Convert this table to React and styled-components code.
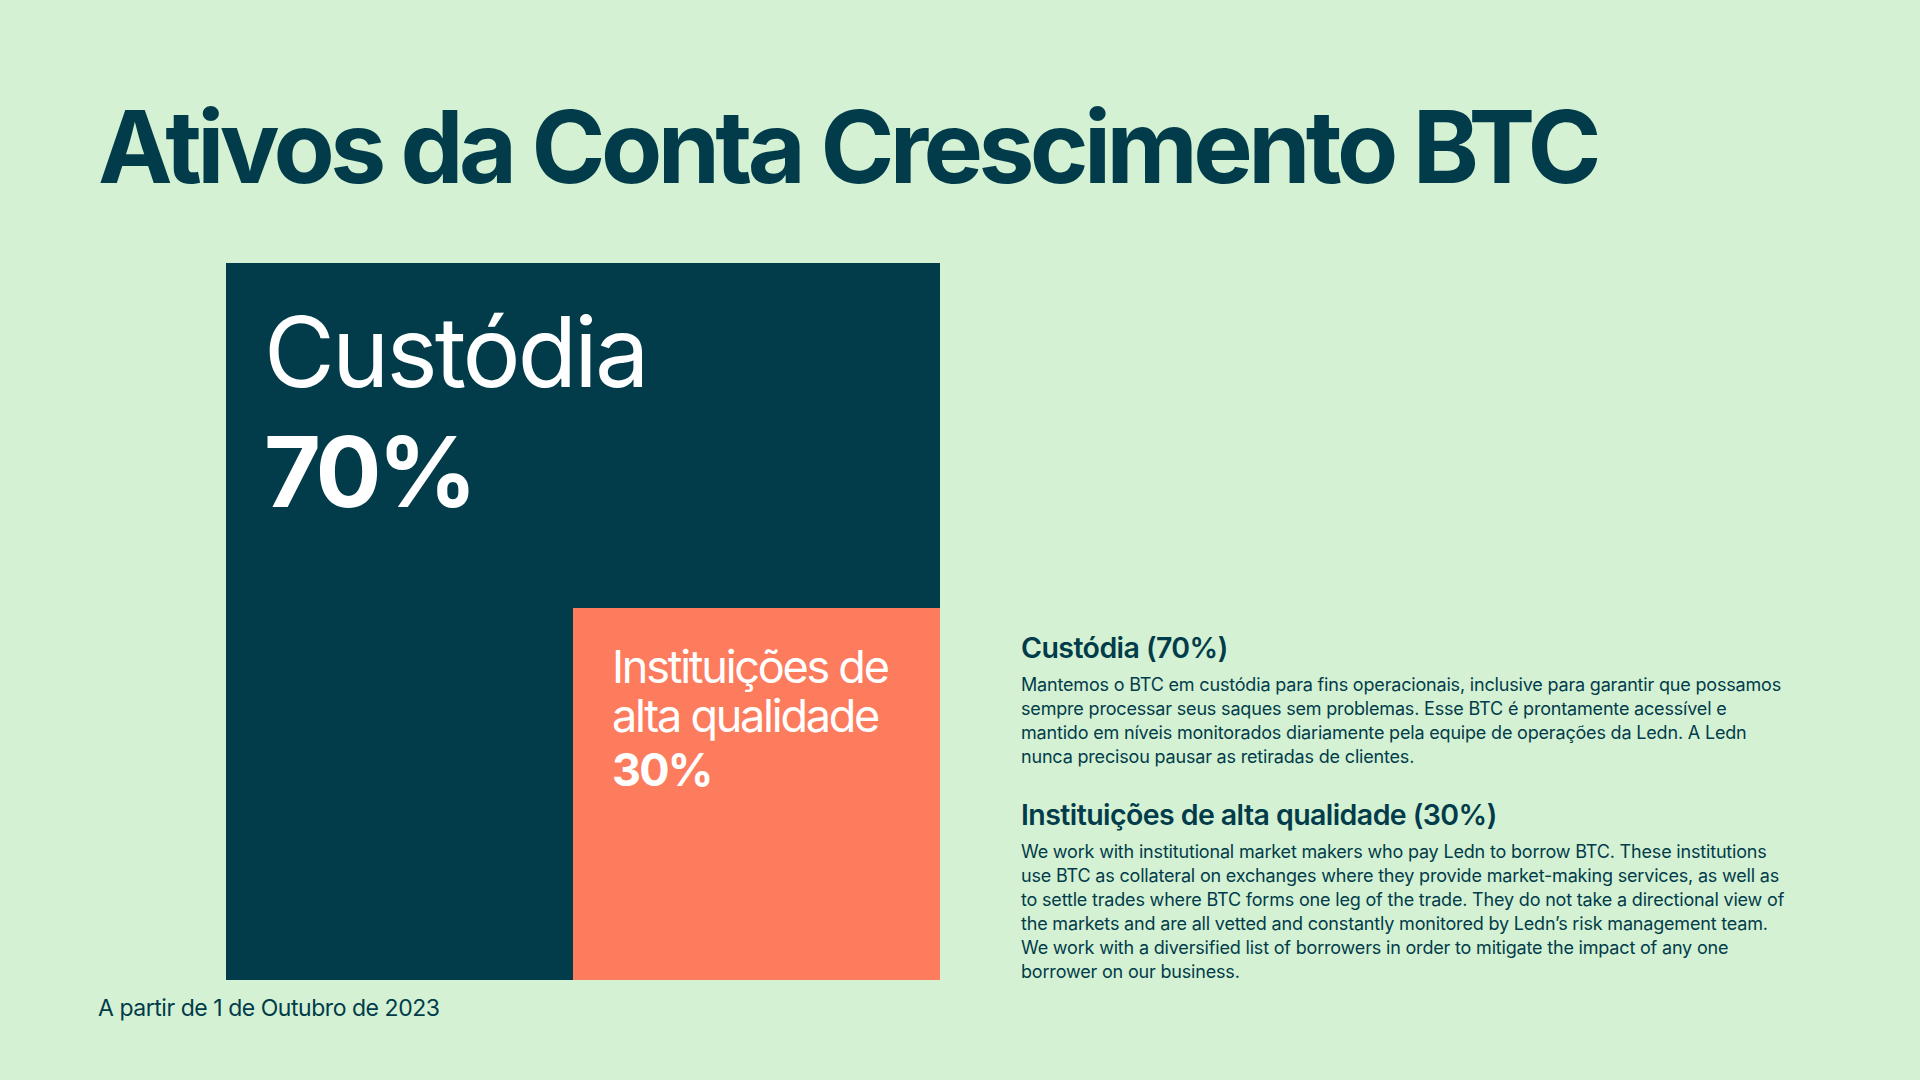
import React from "react";
import styled, { createGlobalStyle } from "styled-components";

const GlobalStyle = createGlobalStyle`
  html, body {
    margin: 0;
    padding: 0;
    background: #d4f1d3;
  }
  body {
    font-family: Inter, "Noto Sans", "Liberation Sans", sans-serif;
    color: #023c4a;
  }
`;

const Page = styled.div`
  width: 1920px;
  height: 1080px;
  box-sizing: border-box;
  padding: 97px 98px 0 98px;
  background: #d4f1d3;
  overflow: hidden;
`;

const Title = styled.h1`
  margin: 0;
  font-size: 100px;
  line-height: 1;
  font-weight: 700;
  letter-spacing: -0.046em;
  color: #023c4a;
`;

const Main = styled.div`
  display: flex;
  align-items: flex-end;
  margin-top: 66px;
`;

const ChartColumn = styled.div`
  padding-left: 128px;
`;

const Treemap = styled.div`
  display: grid;
  grid-template-columns: 347px 367px;
  grid-template-rows: 345px 372px;
  width: 714px;
  height: 717px;
  background: #023c4a;
`;

const Tile = styled.div`
  grid-column: ${(p) => p.$col};
  grid-row: ${(p) => p.$row};
  background: ${(p) => p.$bg || "transparent"};
  padding: ${(p) => p.$pad};
  color: #ffffff;
`;

const TileName = styled.div`
  font-size: ${(p) => p.$size}px;
  line-height: ${(p) => p.$lh}px;
  font-weight: 400;
  letter-spacing: ${(p) => p.$ls || "-0.03em"};
`;

const TileValue = styled.div`
  font-size: ${(p) => p.$size}px;
  line-height: ${(p) => p.$lh}px;
  font-weight: 700;
  letter-spacing: -0.04em;
`;

const Notes = styled.div`
  width: 765px;
  margin-left: 81px;
  margin-bottom: -4px;
`;

const NoteHeading = styled.h3`
  margin: ${(p) => (p.$first ? "0" : "29px")} 0 8px 0;
  font-size: 28.5px;
  line-height: 34px;
  font-weight: 600;
  letter-spacing: -0.02em;
  color: #023c4a;
`;

const NoteText = styled.p`
  margin: 0;
  font-size: 18px;
  line-height: 24px;
  font-weight: 400;
  letter-spacing: -0.01em;
  color: #023c4a;
`;

const Footer = styled.div`
  margin-top: 14px;
  font-size: 23px;
  line-height: 28px;
  letter-spacing: -0.02em;
  color: #023c4a;
`;

export default function App() {
  return (
    <>
      <GlobalStyle />
      <Page>
        <Title>Ativos da Conta Crescimento BTC</Title>
        <Main>
          <ChartColumn>
            <Treemap>
              <Tile $col="1 / 3" $row="1" $pad="31px 0 0 38px">
                <TileName $size={97} $lh={116}>Custódia</TileName>
                <TileValue $size={98} $lh={124}>70%</TileValue>
              </Tile>
              <Tile $col="2" $row="2" $bg="#fd7c5e" $pad="34px 0 0 39px">
                <TileName $size={45} $lh={49} $ls="-0.05em">
                  Instituições de alta qualidade
                </TileName>
                <TileValue $size={45} $lh={59}>30%</TileValue>
              </Tile>
            </Treemap>
          </ChartColumn>
          <Notes>
            <NoteHeading $first>Custódia (70%)</NoteHeading>
            <NoteText>
              Mantemos o BTC em custódia para fins operacionais, inclusive para
              garantir que possamos sempre processar seus saques sem problemas.
              Esse BTC é prontamente acessível e mantido em níveis monitorados
              diariamente pela equipe de operações da Ledn. A Ledn nunca precisou
              pausar as retiradas de clientes.
            </NoteText>
            <NoteHeading>Instituições de alta qualidade (30%)</NoteHeading>
            <NoteText>
              We work with institutional market makers who pay Ledn to borrow
              BTC. These institutions use BTC as collateral on exchanges where
              they provide market-making services, as well as to settle trades
              where BTC forms one leg of the trade. They do not take a
              directional view of the markets and are all vetted and constantly
              monitored by Ledn’s risk management team. We work with a
              diversified list of borrowers in order to mitigate the impact of
              any one borrower on our business.
            </NoteText>
          </Notes>
        </Main>
        <Footer>A partir de 1 de Outubro de 2023</Footer>
      </Page>
    </>
  );
}
